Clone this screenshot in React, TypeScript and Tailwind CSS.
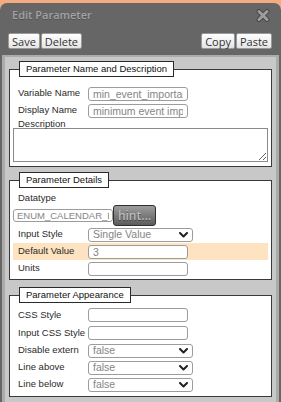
import React from 'react'

const font = {fontFamily: '"Liberation Sans", Arial, sans-serif'}
const uiFont = {fontFamily: '"Open Sans", "Noto Sans", sans-serif'}

function Chevron() {
    return (
        <svg width="9" height="6" viewBox="0 0 9 6" className="shrink-0">
            <path d="M1 1 L4.5 4.5 L8 1" fill="none" stroke="#222" strokeWidth="2" strokeLinecap="round" strokeLinejoin="round"/>
        </svg>
    )
}

function TextBox({value = '', className = 'w-[100px]'}: {value?: string, className?: string}) {
    return (
        <input readOnly value={value}
               className={`${className} h-[14px] rounded-[3px] border border-[#9c9c9c] bg-white px-[4px] text-[10.5px] leading-[12px] text-[#858585] outline-none`}
               style={font}/>
    )
}

function SelectBox({value}: {value: string}) {
    return (
        <div className="flex h-[14px] w-[105px] items-center justify-between rounded-[3px] border border-[#9c9c9c] bg-white pl-[4px] pr-[4px] text-[10.5px] text-[#858585]"
             style={font}>
            <span>{value}</span>
            <Chevron/>
        </div>
    )
}

function Row({label, h = 'h-[17px]', highlight = false, children}: {
    label: string, h?: string, highlight?: boolean, children: React.ReactNode
}) {
    return (
        <div className={`flex ${h} items-center ${highlight ? 'bg-[#fde3bf]' : ''}`}>
            <span className="w-[75px] shrink-0 pl-[5px] text-[9.5px] text-[#2a2a2a]" style={font}>{label}</span>
            {children}
        </div>
    )
}

function Section({title, className = '', children}: { title: string, className?: string, children: React.ReactNode }) {
    return (
        <fieldset className={`border border-[#3a3a3a] bg-white px-[3px] ${className}`}>
            <legend className="ml-[6px] h-[16px] border border-[#2a2a2a] bg-white px-[6px] text-[9.5px] leading-[14px] text-[#111]"
                    style={font}>{title}</legend>
            {children}
        </fieldset>
    )
}

export default function App() {
    return (
        <div className="h-[402px] w-[281px] overflow-hidden bg-[#f5ab80] pt-[3px]">
            <div className="flex h-[399px] flex-col rounded-t-[7px] bg-[#666666]">
                <div className="flex h-[24px] shrink-0 items-center justify-between pl-[12px] pr-[11px]">
                    <span className="text-[11px] font-semibold text-[#a2a2a2] [text-shadow:0_1px_0_#555]" style={uiFont}>Edit Parameter</span>
                    <svg width="14" height="13" viewBox="0 0 14 13">
                        <path d="M3 2.5 L11 10.5 M11 2.5 L3 10.5" stroke="#484848" strokeWidth="5" strokeLinecap="round"/>
                        <path d="M3 2.5 L11 10.5 M11 2.5 L3 10.5" stroke="#9c9c9c" strokeWidth="3" strokeLinecap="round"/>
                    </svg>
                </div>
                <div className="flex shrink-0 items-center justify-between pl-[8px] pr-[9px] pt-[6px] pb-[6px]">
                    <div className="flex gap-[1px]">
                        {['Save', 'Delete'].map(b => (
                            <button key={b}
                                    className="h-[16px] rounded-[2px] border border-[#9a9a9a] bg-gradient-to-b from-white to-[#e4e4e4] px-[3px] text-[11px] leading-[13px] text-[#333]"
                                    style={uiFont}>{b}</button>
                        ))}
                    </div>
                    <div className="flex gap-[1px]">
                        {['Copy', 'Paste'].map(b => (
                            <button key={b}
                                    className="h-[16px] rounded-[2px] border border-[#9a9a9a] bg-gradient-to-b from-white to-[#e4e4e4] px-[3px] text-[11px] leading-[13px] text-[#333]"
                                    style={uiFont}>{b}</button>
                        ))}
                    </div>
                </div>
                <div className="mx-[2px] flex-1 border-x-[3px] border-t-2 border-[#ababab] bg-[#c8c8c8] px-[4px] pt-[4px]">
                    <Section title="Parameter Name and Description" className="pb-[4px]">
                        <div className="pt-[8px]">
                            <Row label="Variable Name"><TextBox value="min_event_importance"/></Row>
                            <Row label="Display Name"><TextBox value="minimum event importance"/></Row>
                            <div className="h-[9px] pl-[5px] text-[9.5px] leading-[9px] text-[#2a2a2a]" style={font}>Description</div>
                            <textarea readOnly
                                      className="block h-[34px] w-full rounded-none border border-[#8a8a8a] bg-white outline-none"/>
                        </div>
                    </Section>
                    <Section title="Parameter Details" className="mt-[5px] pb-[2px]">
                        <div className="pt-[4px]">
                            <div className="flex h-[13px] items-center pl-[5px] text-[9.5px] text-[#2a2a2a]" style={font}>Datatype</div>
                            <div className="flex h-[21px] items-center">
                                <input readOnly value="ENUM_CALENDAR_EVENT_IMPORTANCE"
                                       className="h-[13px] w-[100px] rounded-[3px] border border-[#9c9c9c] bg-white px-[3px] text-[9.5px] leading-[11px] text-[#858585] outline-none"
                                       style={font}/>
                                <button
                                    className="h-[21px] w-[43px] rounded-[3px] border border-[#2e2e2e] bg-gradient-to-b from-[#9d9d9d] to-[#5c5c5c] text-[12px] font-semibold text-[#bdbdbd] [text-shadow:0_1px_0_#444]"
                                    style={uiFont}>hint...</button>
                            </div>
                            <Row label="Input Style"><SelectBox value="Single Value"/></Row>
                            <Row label="Default Value" highlight><TextBox value="3"/></Row>
                            <Row label="Units"><TextBox/></Row>
                        </div>
                    </Section>
                    <Section title="Parameter Appearance" className="mt-[7px] pb-[3px]">
                        <div className="pt-[3px]">
                            <Row label="CSS Style" h="h-[18px]"><TextBox/></Row>
                            <Row label="Input CSS Style" h="h-[18px]"><TextBox/></Row>
                            <Row label="Disable extern"><SelectBox value="false"/></Row>
                            <Row label="Line above"><SelectBox value="false"/></Row>
                            <Row label="Line below"><SelectBox value="false"/></Row>
                        </div>
                    </Section>
                </div>
            </div>
        </div>
    )
}
